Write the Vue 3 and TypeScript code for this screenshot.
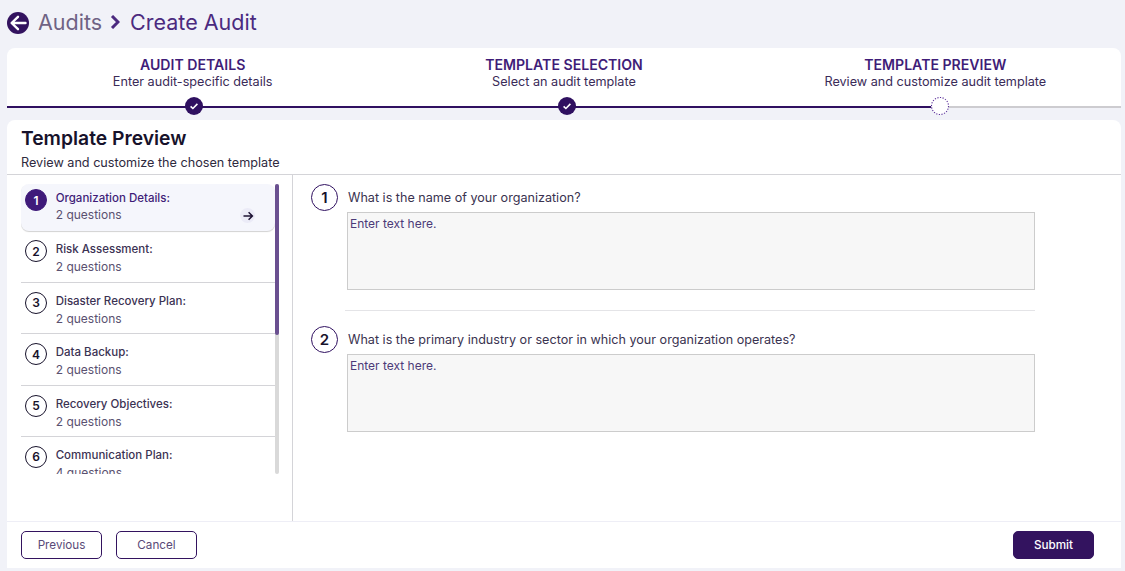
<script setup lang="ts">
interface Step { title: string; sub: string }
const steps: Step[] = [
  { title: 'AUDIT DETAILS', sub: 'Enter audit-specific details' },
  { title: 'TEMPLATE SELECTION', sub: 'Select an audit template' },
  { title: 'TEMPLATE PREVIEW', sub: 'Review and customize audit template' },
]
const sections = [
  { name: 'Organization Details:', count: 2 },
  { name: 'Risk Assessment:', count: 2 },
  { name: 'Disaster Recovery Plan:', count: 2 },
  { name: 'Data Backup:', count: 2 },
  { name: 'Recovery Objectives:', count: 2 },
  { name: 'Communication Plan:', count: 4 },
]
const questions = [
  'What is the name of your organization?',
  'What is the primary industry or sector in which your organization operates?',
]
</script>

<template>
  <div class="page">
    <header class="crumbs">
      <svg class="back" viewBox="0 0 22 22" width="22" height="22">
        <circle cx="11" cy="11" r="11" fill="#33135f" />
        <path d="M18.5 11H5M11 4.8 4.6 11l6.4 6.2" fill="none" stroke="#fff" stroke-width="2.4" stroke-linecap="round" stroke-linejoin="round" />
      </svg>
      <span class="crumb-a">Audits</span>
      <svg class="chev" viewBox="0 0 10 14" width="10" height="14">
        <path d="M2 1l6 6-6 6" fill="none" stroke="#4b2a7f" stroke-width="3" />
      </svg>
      <span class="crumb-b">Create Audit</span>
    </header>

    <section class="stepper">
      <div class="step-labels">
        <div v-for="s in steps" :key="s.title" class="step-label">
          <div class="step-title">{{ s.title }}</div>
          <div class="step-sub">{{ s.sub }}</div>
        </div>
      </div>
      <div class="track">
        <div class="track-done"></div>
        <svg class="node n1" viewBox="0 0 18 18" width="18" height="18">
          <circle cx="9" cy="9" r="9" fill="#2f1060" />
          <path d="M5.6 9.3l2.3 2.2 4.5-4.6" fill="none" stroke="#fff" stroke-width="1.6" />
        </svg>
        <svg class="node n2" viewBox="0 0 18 18" width="18" height="18">
          <circle cx="9" cy="9" r="9" fill="#2f1060" />
          <path d="M5.6 9.3l2.3 2.2 4.5-4.6" fill="none" stroke="#fff" stroke-width="1.6" />
        </svg>
        <svg class="node n3" viewBox="0 0 18 18" width="18" height="18">
          <circle cx="9" cy="9" r="8.5" fill="#fff" stroke="#5b2f9a" stroke-width="1.1" stroke-dasharray="1.2 1.45" />
        </svg>
      </div>
    </section>

    <main class="card">
      <div class="card-head">
        <h1>Template Preview</h1>
        <p>Review and customize the chosen template</p>
      </div>
      <div class="card-body">
        <aside class="side">
          <div class="list-wrap">
            <ul class="list">
              <li v-for="(s, i) in sections" :key="s.name" class="row" :class="{ active: i === 0 }">
                <span class="num">{{ i + 1 }}</span>
                <div class="row-text">
                  <div class="row-name">{{ s.name }}</div>
                  <div class="row-count">{{ s.count }} questions</div>
                </div>
                <span v-if="i === 0" class="go">
                  <svg viewBox="0 0 12 12" width="12" height="12">
                    <path d="M1.5 6h9M6.6 2.2 10.4 6 6.6 9.8" fill="none" stroke="#1d1233" stroke-width="1.5" />
                  </svg>
                </span>
              </li>
            </ul>
            <div class="scroll"><div class="thumb"></div></div>
          </div>
        </aside>
        <div class="questions">
          <template v-for="(q, i) in questions" :key="q">
            <div v-if="i > 0" class="sep"></div>
            <div class="q">
              <div class="q-line">
                <span class="q-num">{{ i + 1 }}</span>
                <span class="q-text">{{ q }}</span>
              </div>
              <div class="answer">Enter text here.</div>
            </div>
          </template>
        </div>
      </div>
      <footer class="foot">
        <button class="btn">Previous</button>
        <button class="btn cancel">Cancel</button>
        <button class="btn submit">Submit</button>
      </footer>
    </main>
  </div>
</template>

<style>
html, body { margin: 0; background: #f1f2f8; }
</style>

<style scoped>
.page {
  width: 1125px;
  height: 571px;
  box-sizing: border-box;
  padding: 0 4px 3px 7px;
  font-family: Inter, "Liberation Sans", sans-serif;
  background: #f1f2f8;
  overflow: hidden;
  display: flex;
  flex-direction: column;
}
.crumbs {
  height: 48px;
  display: flex;
  align-items: center;
  font-size: 21.5px;
  padding-bottom: 5px;
  box-sizing: border-box;
}
.back { margin: 3px 9px 0 0; }
.crumb-a { color: #6f6384; }
.chev { margin: 0 10px 0 8px; }
.crumb-b { color: #4b2a7f; }
.stepper {
  height: 60px;
  background: #fff;
  border-radius: 8px 8px 0 0;
  display: flex;
  flex-direction: column;
}
.step-labels {
  display: grid;
  grid-template-columns: repeat(3, 1fr);
  padding-top: 8px;
  height: 47px;
  box-sizing: border-box;
  text-align: center;
}
.step-title { font-size: 14.1px; line-height: 18px; font-weight: 600; color: #3f1d78; }
.step-sub { font-size: 12.65px; line-height: 16px; color: #3a2b58; }
.track {
  position: relative;
  height: 2px;
  margin-top: 11px;
  background: #cdccd0;
}
.track-done { height: 2px; width: 924px; background: #2f1060; }
.node { position: absolute; top: -9px; display: block; }
.n1 { left: 177.5px; }
.n2 { left: 550.5px; }
.n3 { left: 924px; }
.card {
  margin-top: 12px;
  flex: 1;
  background: #fff;
  border-radius: 8px 8px 0 0;
  display: flex;
  flex-direction: column;
  min-height: 0;
}
.card-head {
  height: 55px;
  box-sizing: border-box;
  padding: 6px 14px 0;
  border-bottom: 1px solid #d4d4d8;
}
.card-head h1 { margin: 0; font-size: 19.3px; line-height: 24px; font-weight: 600; color: #17122b; }
.card-head p { margin: 5px 0 0; font-size: 12.65px; line-height: 16px; color: #2e2a3e; }
.card-body { flex: 1; display: flex; min-height: 0; }
.side {
  width: 286px;
  box-sizing: border-box;
  padding: 9px 0 0 14px;
  border-right: 1px solid #d4d4d8;
  margin-right: 18px;
}
.list-wrap { display: flex; height: 290px; overflow: hidden; }
.list { list-style: none; margin: 0; padding: 0; width: 254px; overflow: hidden; }
.scroll { width: 4px; height: 290px; background: #d9d9d9; border-radius: 2px; }
.thumb { width: 4px; height: 151px; background: #6a5090; border-radius: 2px; }
.row {
  position: relative;
  height: 51.4px;
  box-sizing: border-box;
  padding: 9px 4px 0 4px;
  display: flex;
  border-bottom: 1px solid #d4d4d8;
}
.row.active {
  height: 47.4px;
  padding-top: 5px;
  background: #f5f6fc;
  border-radius: 8px;
  border-bottom: 0;
  box-shadow: 0 1px 1px rgba(0, 0, 0, 0.18);
}
.num {
  width: 22px;
  height: 22px;
  flex: none;
  box-sizing: border-box;
  border: 1px solid #17122b;
  border-radius: 50%;
  font-size: 12px;
  font-weight: 600;
  color: #17122b;
  display: flex;
  align-items: center;
  justify-content: center;
}
.active .num {
  background: #3f1a7a;
  border-color: #3f1a7a;
  color: #fff;
}
.row-text { margin-left: 8.7px; padding-top: 1px; }
.row-name { font-size: 11.5px; line-height: 17px; font-weight: 500; color: #3b3253; }
.row-count { margin-top: 0; font-size: 12px; line-height: 17px; color: #5a5170; }
.active .row-name { color: #3f1d78; }
.active .row-count { margin-top: -1px; }
.go {
  position: absolute;
  right: 20px;
  top: 24px;
  width: 15px;
  height: 15px;
  border-radius: 50%;
  background: #ebebf7;
  display: flex;
  align-items: center;
  justify-content: center;
}
.questions { flex: 1; padding-top: 9px; }
.q { width: 724px; }
.sep { margin: 20px 0 15px 34px; width: 690px; height: 1px; background: #e4e4e7; }
.q-line { display: flex; align-items: center; height: 28px; }
.q-num {
  width: 27px;
  height: 27px;
  flex: none;
  align-self: flex-start;
  box-sizing: border-box;
  border: 1px solid #2f1060;
  border-radius: 50%;
  font-size: 15px;
  font-weight: 600;
  color: #17122b;
  display: flex;
  align-items: center;
  justify-content: center;
}
.q-text { margin: 0 0 2px 10px; font-size: 12.6px; color: #3a3350; }
.answer {
  margin-left: 36px;
  height: 78px;
  box-sizing: border-box;
  padding: 3px 2px;
  background: #f7f7f7;
  border: 1px solid #ccc;
  font-size: 12px;
  line-height: 16px;
  color: #4c3a78;
}
.foot {
  height: 47px;
  flex: none;
  box-sizing: border-box;
  padding: 9px 27px 0 14px;
  border-top: 1px solid #eeeef6;
  display: flex;
  align-items: flex-start;
}
.btn {
  width: 81px;
  height: 28px;
  box-sizing: border-box;
  border: 1px solid #33135f;
  border-radius: 5px;
  background: #fff;
  font-family: inherit;
  font-size: 11.7px;
  color: #5a4a78;
  padding: 0 0 1px;
}
.cancel { margin-left: 14px; }
.submit {
  margin-left: auto;
  background: #33135f;
  color: #fff;
  font-weight: 500;
}
</style>
